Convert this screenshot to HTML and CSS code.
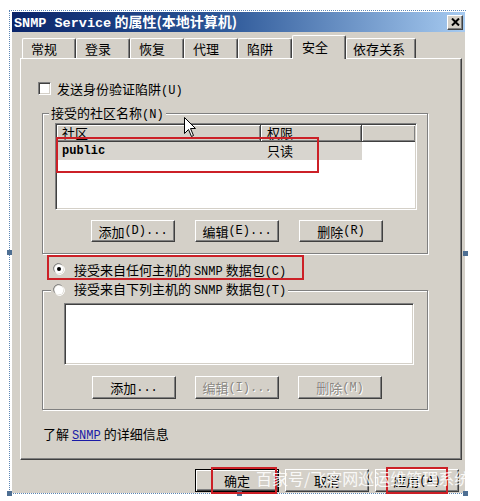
FILE: index.html
```html
<!DOCTYPE html>
<html lang="zh-CN">
<head>
<meta charset="utf-8">
<title>SNMP Service 的属性</title>
<link rel="stylesheet" href="styles.css">
</head>
<body>
<div class="page">
  <div class="frame">
    <div class="window">
      <div class="titlebar">
        <span class="title"><span class="en">SNMP Service</span> 的属性(本地计算机)</span>
        <span class="close"><svg width="9" height="8" viewBox="0 0 9 8"><path d="M1 0.5 L8 7.5 M8 0.5 L1 7.5" stroke="#000" stroke-width="2"/></svg></span>
      </div>
      <div class="tabs">
        <span class="tab">常规</span>
        <span class="tab">登录</span>
        <span class="tab">恢复</span>
        <span class="tab">代理</span>
        <span class="tab">陷阱</span>
        <span class="tab active">安全</span>
        <span class="tab wide">依存关系</span>
      </div>
      <div class="panel">
        <div class="check"><span class="box"></span><span>发送身份验证陷阱<span class="en">(U)</span></span></div>
        <div class="group g1">
          <div class="legend">接受的社区名称<span class="en">(N)</span></div>
          <div class="listview">
            <div class="lv-head">
              <span class="hc c1">社区</span>
              <span class="hc c2">权限</span>
              <span class="hc c3"></span>
            </div>
            <div class="lv-row">
              <span class="cell c1 en bold">public</span>
              <span class="cell c2">只读</span>
            </div>
          </div>
          <div class="btns">
            <span class="btn">添加<span class="en">(D)...</span></span>
            <span class="btn">编辑<span class="en">(E)...</span></span>
            <span class="btn">删除<span class="en">(R)</span></span>
          </div>
        </div>
        <div class="radio r1"><span class="rad"><svg width="12" height="12" viewBox="0 0 12 12"><path d="M1.5 8.5 A5 5 0 0 1 8.5 1.5" stroke="#808080" fill="none"/><circle cx="6" cy="6" r="4.5" fill="#fff"/><path d="M10.5 3.5 A5 5 0 0 1 3.5 10.5" stroke="#fff" fill="none"/><circle cx="6" cy="6" r="2" fill="#000"/></svg></span><span>接受来自任何主机的 <span class="en">SNMP</span> 数据包<span class="en">(C)</span></span></div>
        <div class="group g2">
          <div class="legend radio r2"><span class="rad"><svg width="12" height="12" viewBox="0 0 12 12"><path d="M1.5 8.5 A5 5 0 0 1 8.5 1.5" stroke="#808080" fill="none"/><circle cx="6" cy="6" r="4.5" fill="#fff"/><path d="M10.5 3.5 A5 5 0 0 1 3.5 10.5" stroke="#fff" fill="none"/></svg></span><span>接受来自下列主机的 <span class="en">SNMP</span> 数据包<span class="en">(T)</span></span></div>
          <div class="listbox"></div>
          <div class="btns tall">
            <span class="btn">添加<span class="en">...</span></span>
            <span class="btn disabled">编辑<span class="en">(I)...</span></span>
            <span class="btn disabled">删除<span class="en">(M)</span></span>
          </div>
        </div>
        <div class="info">了解 <a class="link en">SNMP</a> 的详细信息</div>
      </div>
      <div class="footer">
        <span class="btn default">确定</span>
        <span class="btn">取消</span>
        <span class="btn">应用<span class="en">(A)</span></span>
      </div>
    </div>
  </div>

  <span class="handle h-lm"></span>
  <span class="handle h-rm"></span>
  <span class="handle h-bl"></span>
  <span class="handle h-bm"></span>
  <span class="handle h-br"></span>

  <svg class="cursor" width="13" height="21" viewBox="0 0 13 21"><path d="M0.5 0.5 L0.5 16.5 L4.5 12.5 L7.5 19.5 L9.5 18.5 L6.5 11.5 L11.5 11.5 Z" fill="#fff" stroke="#000"/></svg>

  <span class="mark m1"></span>
  <span class="mark m2"></span>
  <span class="mark m3"></span>
  <span class="mark m4"></span>

  <span class="watermark">百家号/飞客网巡运维管理系统</span>
</div>
</body>
</html>
```

FILE: styles.css
```css
* { box-sizing: border-box; }

body {
  margin: 0;
  background: #ffffff;
  font-family: "Noto Sans CJK SC", "Noto Sans", sans-serif;
  font-size: 13px;
  color: #000;
}

.en {
  font-family: "Liberation Mono", "Noto Sans CJK SC", monospace;
  font-size: 12px;
}

.bold { font-weight: bold; }

.page {
  position: relative;
  width: 480px;
  height: 501px;
  overflow: hidden;
}

.frame {
  margin: 10px 0 0 9px;
  width: 457px;
  height: 484px;
  border-left: 1px dotted #5b85b5;
  border-top: 1px dotted #5b85b5;
  border-bottom: 1px dotted #5b85b5;
  padding: 1px 0 0 2px;
}

.window {
  width: 453px;
  height: 481px;
  background: #d4d0c8;
  display: flex;
  flex-direction: column;
}

/* title bar */
.titlebar {
  height: 20px;
  background: linear-gradient(90deg, #0a246a 0%, #2a5596 45%, #a6caf0 100%);
  display: flex;
  align-items: center;
  justify-content: space-between;
  padding: 0 2px 0 2px;
  color: #fff;
  font-weight: bold;
  font-size: 14px;
}

.titlebar .en {
  font-size: 13.5px;
  font-weight: bold;
}

.title { line-height: 20px; }

.close {
  width: 16px;
  height: 15px;
  background: #d4d0c8;
  border: 1px solid;
  border-color: #fff #404040 #404040 #fff;
  box-shadow: inset -1px -1px #808080;
  display: flex;
  align-items: center;
  justify-content: center;
}

/* tabs */
.tabs {
  display: flex;
  align-items: flex-end;
  height: 23px;
  margin: 3px 0 0 10px;
}

.tab {
  width: 54px;
  height: 20px;
  padding-left: 8px;
  line-height: 19px;
  border-top: 1px solid #fff;
  border-left: 1px solid #fff;
  border-right: 1px solid #404040;
  box-shadow: inset -1px 0 #808080;
  border-radius: 2px 2px 0 0;
}

.tab.wide { width: 70px; padding-left: 6px; }

.tab.active {
  height: 24px;
  margin-bottom: -1px;
  background: #d4d0c8;
  position: relative;
  z-index: 1;
  line-height: 21px;
  padding-left: 9px;
}

/* panel */
.panel {
  margin-left: 8px;
  width: 442px;
  height: 402px;
  border: 1px solid;
  border-color: #fff #404040 #404040 #fff;
  box-shadow: inset -1px -1px #808080;
}

.check {
  margin: 21px 0 0 17px;
  height: 16px;
  display: flex;
  align-items: center;
  gap: 6px;
}

.box {
  width: 13px;
  height: 13px;
  background: #fff;
  border: 1px solid;
  border-color: #808080 #fff #fff #808080;
  box-shadow: inset 1px 1px #404040, inset -1px -1px #d4d0c8;
}

.group {
  width: 386px;
  border: 1px solid #808080;
  box-shadow: 1px 1px 0 #fff, inset 1px 1px 0 #fff;
  margin-left: 21px;
}

.g1 { margin-top: 17px; height: 141px; }
.g2 { margin-top: 13px; height: 120px; }

.legend {
  width: fit-content;
  height: 18px;
  line-height: 18px;
  margin: -10px 0 0 6px;
  padding: 0 2px;
  background: #d4d0c8;
}

/* list view */
.listview {
  margin: 1px 0 0 12px;
  width: 362px;
  height: 87px;
  background: #fff;
  border: 1px solid;
  border-color: #808080 #fff #fff #808080;
  box-shadow: inset 1px 1px #404040, inset -1px -1px #d4d0c8;
  padding: 1px;
}

.lv-head {
  display: flex;
  height: 17px;
  background: #d4d0c8;
}

.hc {
  height: 17px;
  line-height: 16px;
  border-right: 1px solid #404040;
  border-bottom: 1px solid #404040;
  box-shadow: inset 1px 1px #fff, inset -1px -1px #808080;
}

.c1 { width: 204px; padding-left: 5px; }
.c2 { width: 101px; padding-left: 6px; }
.c3 { flex: 1; border-right: none; }

.lv-row {
  display: flex;
  width: 305px;
  height: 18px;
  background: #d8d5cf;
  line-height: 18px;
}

.cell.en { font-size: 12px; }

/* buttons */
.btns {
  display: flex;
  justify-content: center;
  gap: 20px;
  padding-left: 4px;
  margin-top: 10px;
}

.btns.tall { margin-top: 11px; gap: 19px; }

.btn {
  width: 84px;
  height: 22px;
  background: #d4d0c8;
  border: 1px solid;
  border-color: #fff #404040 #404040 #fff;
  box-shadow: inset -1px -1px #808080;
  display: flex;
  align-items: center;
  justify-content: center;
  line-height: 1;
}

.btns.tall .btn { height: 23px; }

.btn.disabled {
  color: #8a8782;
  text-shadow: 1px 1px 0 #fff;
}

/* radios */
.radio {
  display: flex;
  align-items: center;
  gap: 9px;
  height: 16px;
}

.r1 { margin: 7px 0 0 32px; }

.r2 {
  height: 18px;
  margin: -10px 0 0 8px;
  padding: 0 2px;
}

.rad {
  width: 12px;
  height: 12px;
  display: flex;
}

.listbox {
  margin: 4px 0 0 21px;
  width: 350px;
  height: 62px;
  background: #fff;
  border: 1px solid;
  border-color: #808080 #fff #fff #808080;
  box-shadow: inset 1px 1px #404040, inset -1px -1px #d4d0c8;
}

.info {
  margin: 15px 0 0 22px;
  height: 18px;
  line-height: 18px;
}

.link {
  color: #1a1aa6;
  text-decoration: underline;
}

/* footer */
.footer {
  display: flex;
  justify-content: flex-end;
  gap: 6px;
  margin-top: 9px;
  padding-right: 6px;
}

.footer .btn { height: 23px; }

.btn.default {
  border: 1px solid #000;
  box-shadow: inset 1px 1px #fff, inset -1px -1px #404040, inset -2px -2px #808080;
}

/* overlays */
.handle {
  position: absolute;
  width: 5px;
  height: 5px;
  background: #4e6f93;
}

.h-lm { left: 7px; top: 250px; }
.h-rm { left: 463px; top: 251px; }
.h-bl { left: 7px; top: 491px; }
.h-bm { left: 237px; top: 491px; }
.h-br { left: 463px; top: 491px; }

.cursor {
  position: absolute;
  left: 184px;
  top: 117px;
}

.mark {
  position: absolute;
  border: 2px solid #cc2027;
}

.m1 { left: 56px; top: 137px; width: 263px; height: 36px; }
.m2 { left: 47px; top: 255px; width: 257px; height: 25px; }
.m3 { left: 211px; top: 467px; width: 66px; height: 27px; }
.m4 { left: 386px; top: 467px; width: 62px; height: 27px; }

.watermark {
  position: absolute;
  left: 256px;
  top: 467px;
  font-size: 16px;
  line-height: 22px;
  color: rgba(255, 255, 255, 0.88);
  white-space: nowrap;
  letter-spacing: 0;
}
```
